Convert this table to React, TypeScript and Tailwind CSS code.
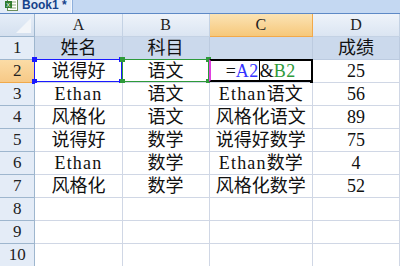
import React from "react"

const cjk = "font-['Liberation_Serif','Noto_Sans_CJK_SC',serif]"

const cols = [
  { key: "A", w: "w-[91px]" },
  { key: "B", w: "w-[91px]" },
  { key: "C", w: "w-[108px]" },
  { key: "D", w: "w-[91px]" },
]

const rows: string[][] = [
  ["姓名", "科目", "", "成绩"],
  ["说得好", "语文", "", "25"],
  ["Ethan", "语文", "Ethan语文", "56"],
  ["风格化", "语文", "风格化语文", "89"],
  ["说得好", "数学", "说得好数学", "75"],
  ["Ethan", "数学", "Ethan数学", "4"],
  ["风格化", "数学", "风格化数学", "52"],
  ["", "", "", ""],
  ["", "", "", ""],
  ["", "", "", ""],
]

function CellText({ text }: { text: string }) {
  const parts = text.match(/[A-Za-z]+|[^A-Za-z]+/g) ?? []
  return (
    <>
      {parts.map((p, i) =>
        /^[A-Za-z]/.test(p) ? (
          <span key={i} className="tracking-[1.2px]">{p}</span>
        ) : (
          <span key={i}>{p}</span>
        )
      )}
    </>
  )
}

function SheetIcon() {
  return (
    <svg width="13" height="12" viewBox="0 0 13 12">
      <rect x="2.5" y="0.5" width="10" height="11" fill="#fff" stroke="#6b8e5a" />
      <line x1="5" y1="3" x2="11" y2="3" stroke="#8aa97a" />
      <line x1="5" y1="6" x2="11" y2="6" stroke="#8aa97a" />
      <line x1="5" y1="9" x2="11" y2="9" stroke="#8aa97a" />
      <rect x="0" y="2" width="7" height="7" fill="#2f7d32" />
      <text x="1.2" y="8" fontSize="6" fill="#fff" fontFamily="Liberation Sans">X</text>
    </svg>
  )
}

// small square handle drawn on a selection corner
function Handle({ pos, color }: { pos: string; color: string }) {
  return <span className={`absolute w-[5px] h-[5px] ${pos} ${color}`} />
}

function RangeBox({ border, handle }: { border: string; handle: string }) {
  return (
    <div className={`absolute -left-px -top-px -right-0 -bottom-0 border ${border} pointer-events-none`}>
      <Handle pos="-left-[3px] -top-[3px]" color={handle} />
      <Handle pos="-right-[3px] -top-[3px]" color={handle} />
      <Handle pos="-left-[3px] -bottom-[3px]" color={handle} />
      <Handle pos="-right-[3px] -bottom-[3px]" color={handle} />
    </div>
  )
}

function FormulaCell() {
  return (
    <div className="relative w-[108px] h-[23px] flex items-center justify-center border-r border-b border-[#d0d7e5] bg-white">
      <div className="absolute -left-px -top-px right-[-1px] bottom-0 border-2 border-black border-l-[#e040e0]" />
      <span className={`${cjk} text-[18px] leading-none flex items-center`}>
        <span className="text-[#111]">=</span>
        <span className="text-[#3333ff] tracking-[0.5px]">A2</span>
        <span className="inline-block w-px h-[22px] bg-black" />
        <span className="text-[#111]">&amp;</span>
        <span className="text-[#2e9a3a] tracking-[0.5px]">B2</span>
      </span>
      <span className="absolute -right-[3px] -bottom-[3px] w-[5px] h-[5px] bg-black" />
    </div>
  )
}

export default function App() {
  return (
    <div className="w-[400px] h-[266px] overflow-hidden bg-white select-none">
      {/* workbook tab strip */}
      <div className="h-[13px] bg-[#c4d8f2] flex items-end overflow-hidden">
        <div className="h-[16px] w-[72px] flex items-center gap-[4px] pl-[5px] bg-[#e3ecf8] border-r border-[#f4f8fd]">
          <SheetIcon />
          <span className="font-['Liberation_Sans',sans-serif] text-[12px] font-bold text-[#15428b] leading-none">Book1 *</span>
        </div>
        <div className="w-px h-full bg-[#8fb0dc]" />
      </div>
      <div className="h-px bg-[#5d89c6]" />

      {/* column headers */}
      <div className="flex h-[23px]">
        <div className="relative w-[37px] h-full bg-gradient-to-b from-[#e6eef8] to-[#d4e0ef] border-r border-b border-[#9eb6ce]">
          <svg className="absolute right-[3px] bottom-[3px]" width="15" height="15" viewBox="0 0 15 15">
            <polygon points="15,0 15,15 0,15" fill="#f2f5f9" />
          </svg>
        </div>
        {cols.map((c) =>
          c.key === "C" ? (
            <div
              key={c.key}
              className={`${c.w} h-full flex items-center justify-center bg-gradient-to-b from-[#fbe3b4] to-[#f6c87a] border-r border-b border-[#f2a94a] font-['Liberation_Serif',serif] text-[16px] text-[#222]`}
            >
              {c.key}
            </div>
          ) : (
            <div
              key={c.key}
              className={`${c.w} h-full flex items-center justify-center bg-gradient-to-b from-[#eef3fa] to-[#dbe5f2] border-r border-b border-[#c4d2e4] font-['Liberation_Serif',serif] text-[16px] text-[#222]`}
            >
              {c.key}
            </div>
          )
        )}
      </div>

      {/* data rows */}
      {rows.map((r, i) => {
        const n = i + 1
        const active = n === 2
        const band = n === 1
        return (
          <div key={n} className="flex h-[23px]">
            <div
              className={`w-[37px] h-full flex items-center justify-center border-r border-b font-['Liberation_Serif',serif] text-[17px] text-[#222] ${
                active
                  ? "bg-gradient-to-b from-[#fbdca6] to-[#f7c987] border-[#f0a94a]"
                  : "bg-[#e4ecf7] border-[#9eb6ce]"
              }`}
            >
              {n}
            </div>
            {cols.map((c, j) => {
              if (active && c.key === "C") return <FormulaCell key={c.key} />
              return (
                <div
                  key={c.key}
                  className={`relative ${c.w} h-full flex items-center justify-center border-r border-b ${cjk} text-[18px] leading-none text-[#111] ${
                    band ? "bg-[#cbd9ec] border-[#bccbe0]" : "bg-white border-[#d0d7e5]"
                  }`}
                >
                  <CellText text={r[j]} />
                  {active && c.key === "A" && <RangeBox border="border-[#1a1aff]" handle="bg-[#1a1aff]" />}
                  {active && c.key === "B" && <RangeBox border="border-[#2e9a3a]" handle="bg-[#2e9a3a]" />}
                </div>
              )
            })}
          </div>
        )
      })}
    </div>
  )
}
